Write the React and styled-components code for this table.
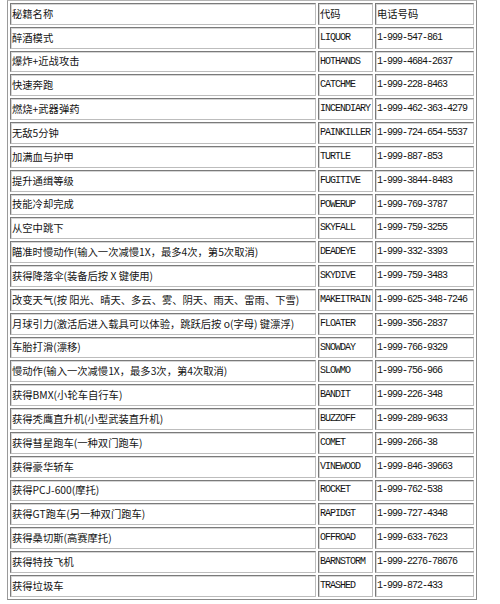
import React from "react";
import styled, { createGlobalStyle } from "styled-components";

const GlobalStyle = createGlobalStyle`
  html, body {
    margin: 0;
    padding: 0;
    background: #fff;
  }
  body {
    padding-left: 7px;
    font-family: "Noto Sans CJK SC", "DejaVu Sans", sans-serif;
  }
`;

const Table = styled.table`
  width: 470px;
  table-layout: fixed;
  border-collapse: separate;
  border-spacing: 2px;
  border: 1px solid;
  border-color: #b4b4b4 #8a8a8a #8a8a8a #9a9a9a;
  color: #141414;
`;

const Col = styled.col`
  width: ${(p) => p.$w}px;
`;

const Cell = styled.td`
  box-sizing: border-box;
  height: 21.84px;
  padding: 0 1px;
  border: 1px solid;
  border-color: #7a7a7a #bdbdbd #bdbdbd #7a7a7a;
  box-shadow: inset 1px 1px 0 #d6d6d6;
  white-space: nowrap;
  overflow: hidden;
  vertical-align: middle;
  font-size: ${(p) => (p.$mono ? "10px" : "10.3px")};
  font-family: ${(p) =>
    p.$mono
      ? '"Liberation Mono", "DejaVu Sans Mono", monospace'
      : '"Noto Sans CJK SC", "DejaVu Sans", sans-serif'};
  letter-spacing: ${(p) => (p.$mono ? "-1px" : "0")};
  line-height: 1;
`;

const cheats = [
  ["醉酒模式", "LIQUOR", "1-999-547-861"],
  ["爆炸+近战攻击", "HOTHANDS", "1-999-4684-2637"],
  ["快速奔跑", "CATCHME", "1-999-228-8463"],
  ["燃烧+武器弹药", "INCENDIARY", "1-999-462-363-4279"],
  ["无敌5分钟", "PAINKILLER", "1-999-724-654-5537"],
  ["加满血与护甲", "TURTLE", "1-999-887-853"],
  ["提升通缉等级", "FUGITIVE", "1-999-3844-8483"],
  ["技能冷却完成", "POWERUP", "1-999-769-3787"],
  ["从空中跳下", "SKYFALL", "1-999-759-3255"],
  ["瞄准时慢动作(输入一次减慢1X，最多4次，第5次取消)", "DEADEYE", "1-999-332-3393"],
  ["获得降落伞(装备后按 X 键使用)", "SKYDIVE", "1-999-759-3483"],
  ["改变天气(按 阳光、晴天、多云、雾、阴天、雨天、雷雨、下雪)", "MAKEITRAIN", "1-999-625-348-7246"],
  ["月球引力(激活后进入载具可以体验，跳跃后按 o(字母) 键漂浮)", "FLOATER", "1-999-356-2837"],
  ["车胎打滑(漂移)", "SNOWDAY", "1-999-766-9329"],
  ["慢动作(输入一次减慢1X，最多3次，第4次取消)", "SLOWMO", "1-999-756-966"],
  ["获得BMX(小轮车自行车)", "BANDIT", "1-999-226-348"],
  ["获得秃鹰直升机(小型武装直升机)", "BUZZOFF", "1-999-289-9633"],
  ["获得彗星跑车(一种双门跑车)", "COMET", "1-999-266-38"],
  ["获得豪华轿车", "VINEWOOD", "1-999-846-39663"],
  ["获得PCJ-600(摩托)", "ROCKET", "1-999-762-538"],
  ["获得GT跑车(另一种双门跑车)", "RAPIDGT", "1-999-727-4348"],
  ["获得桑切斯(高赛摩托)", "OFFROAD", "1-999-633-7623"],
  ["获得特技飞机", "BARNSTORM", "1-999-2276-78676"],
  ["获得垃圾车", "TRASHED", "1-999-872-433"],
];

const App = () => {
  return (
    <>
      <GlobalStyle />
      <Table>
        <colgroup>
          <Col $w={306} />
          <Col $w={55} />
          <Col $w={99} />
        </colgroup>
        <tbody>
          <tr>
            <Cell>秘籍名称</Cell>
            <Cell>代码</Cell>
            <Cell>电话号码</Cell>
          </tr>
          {cheats.map(([name, code, phone]) => (
            <tr key={code}>
              <Cell>{name}</Cell>
              <Cell $mono>{code}</Cell>
              <Cell $mono>{phone}</Cell>
            </tr>
          ))}
        </tbody>
      </Table>
    </>
  );
};

export default App;
